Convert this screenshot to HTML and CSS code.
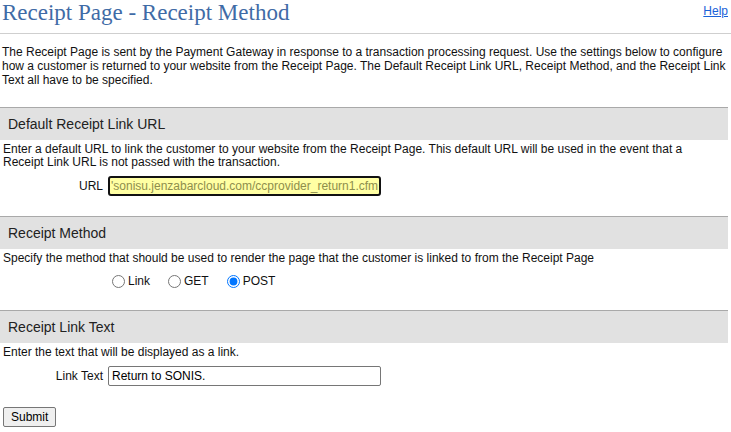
FILE: index.html
```html
<!DOCTYPE html>
<html>
<head>
<meta charset="utf-8">
<title>Receipt Page - Receipt Method</title>
<link rel="stylesheet" href="styles.css">
</head>
<body>
<div class="page">
  <div class="header">
    <h1 class="title">Receipt Page - Receipt Method</h1>
    <a class="help" href="#">Help</a>
  </div>
  <div class="rule"></div>
  <p class="intro">The Receipt Page is sent by the Payment Gateway in response to a transaction processing request. Use the settings below to configure how a customer is returned to your website from the Receipt Page. The Default Receipt Link URL, Receipt Method, and the Receipt Link Text all have to be specified.</p>

  <div class="section">
    <div class="bar">Default Receipt Link URL</div>
    <p class="desc">Enter a default URL to link the customer to your website from the Receipt Page. This default URL will be used in the event that a Receipt Link URL is not passed with the transaction.</p>
    <div class="row">
      <label class="lbl">URL</label>
      <div class="field url-field"><span class="url-text">'sonisu.jenzabarcloud.com/ccprovider_return1.cfm</span></div>
    </div>
  </div>

  <div class="section">
    <div class="bar">Receipt Method</div>
    <p class="desc">Specify the method that should be used to render the page that the customer is linked to from the Receipt Page</p>
    <div class="row">
      <span class="lbl"></span>
      <div class="radios">
        <label class="opt"><input type="radio" name="m" class="radio">Link</label>
        <label class="opt"><input type="radio" name="m" class="radio">GET</label>
        <label class="opt"><input type="radio" name="m" class="radio" checked>POST</label>
      </div>
    </div>
  </div>

  <div class="section">
    <div class="bar">Receipt Link Text</div>
    <p class="desc">Enter the text that will be displayed as a link.</p>
    <div class="row">
      <label class="lbl">Link Text</label>
      <input class="field text-field" type="text" value="Return to SONIS.">
    </div>
  </div>

  <button class="submit" type="button">Submit</button>
</div>
</body>
</html>
```

FILE: styles.css
```css
html, body {
  margin: 0;
  padding: 0;
  background: #ffffff;
}

body {
  font-family: "Liberation Sans", Arial, sans-serif;
  font-size: 12px;
  color: #111;
}

.page {
  padding: 0 3px 0 2px;
}

.header {
  display: flex;
  justify-content: space-between;
  align-items: flex-start;
  height: 33px;
}

.title {
  margin: 0;
  font-family: "Liberation Serif", "Times New Roman", serif;
  font-weight: normal;
  font-size: 23px;
  line-height: 25px;
  color: #3f6ba6;
}

.help {
  margin-top: 4px;
  font-size: 12px;
  color: #1a62d8;
  text-decoration: underline;
}

.rule {
  border-top: 1px solid #cfcfcf;
  margin: 0 -3px 0 -2px;
}

.intro {
  margin: 11px 0 0 0;
  line-height: 14px;
}

.section {
  margin-top: 20px;
}

.bar {
  border-top: 1px solid #a9a9a9;
  background: #e1e1e1;
  height: 32px;
  line-height: 32px;
  font-size: 14px;
  color: #222;
  padding-left: 8px;
  margin-left: -2px;
}

.desc {
  margin: 3px 10px 0 1px;
  line-height: 13px;
}

.row {
  display: grid;
  grid-template-columns: 106px 1fr;
  align-items: center;
  margin-top: 7px;
}

.lbl {
  text-align: right;
  padding-right: 5px;
  font-size: 12px;
}

.field {
  box-sizing: border-box;
  width: 273px;
  height: 20px;
  font-family: "Liberation Sans", Arial, sans-serif;
  font-size: 12px;
}

.url-field {
  background: #ffffa3;
  border: 2px solid #111;
  border-radius: 3px;
  color: #8e8e4c;
  line-height: 16px;
  padding-left: 1px;
  overflow: hidden;
  white-space: nowrap;
}

.text-field {
  margin: 0;
  border: 1px solid #767676;
  border-radius: 2px;
  padding: 0 3px;
  color: #000;
  background: #fff;
}

.radios {
  display: flex;
  align-items: center;
  height: 18px;
}

.opt {
  display: inline-flex;
  align-items: center;
  margin-right: 14px;
  color: #111;
}

.radio {
  margin: 0 3px 0 4px;
  width: 13px;
  height: 13px;
}

.submit {
  margin-top: 21px;
  margin-left: 1px;
  font-family: "Liberation Sans", Arial, sans-serif;
  font-size: 12px;
  padding: 1px 7px;
  height: 20px;
  background: #efefef;
  border: 1px solid #767676;
  border-radius: 2px;
  color: #000;
}
```
